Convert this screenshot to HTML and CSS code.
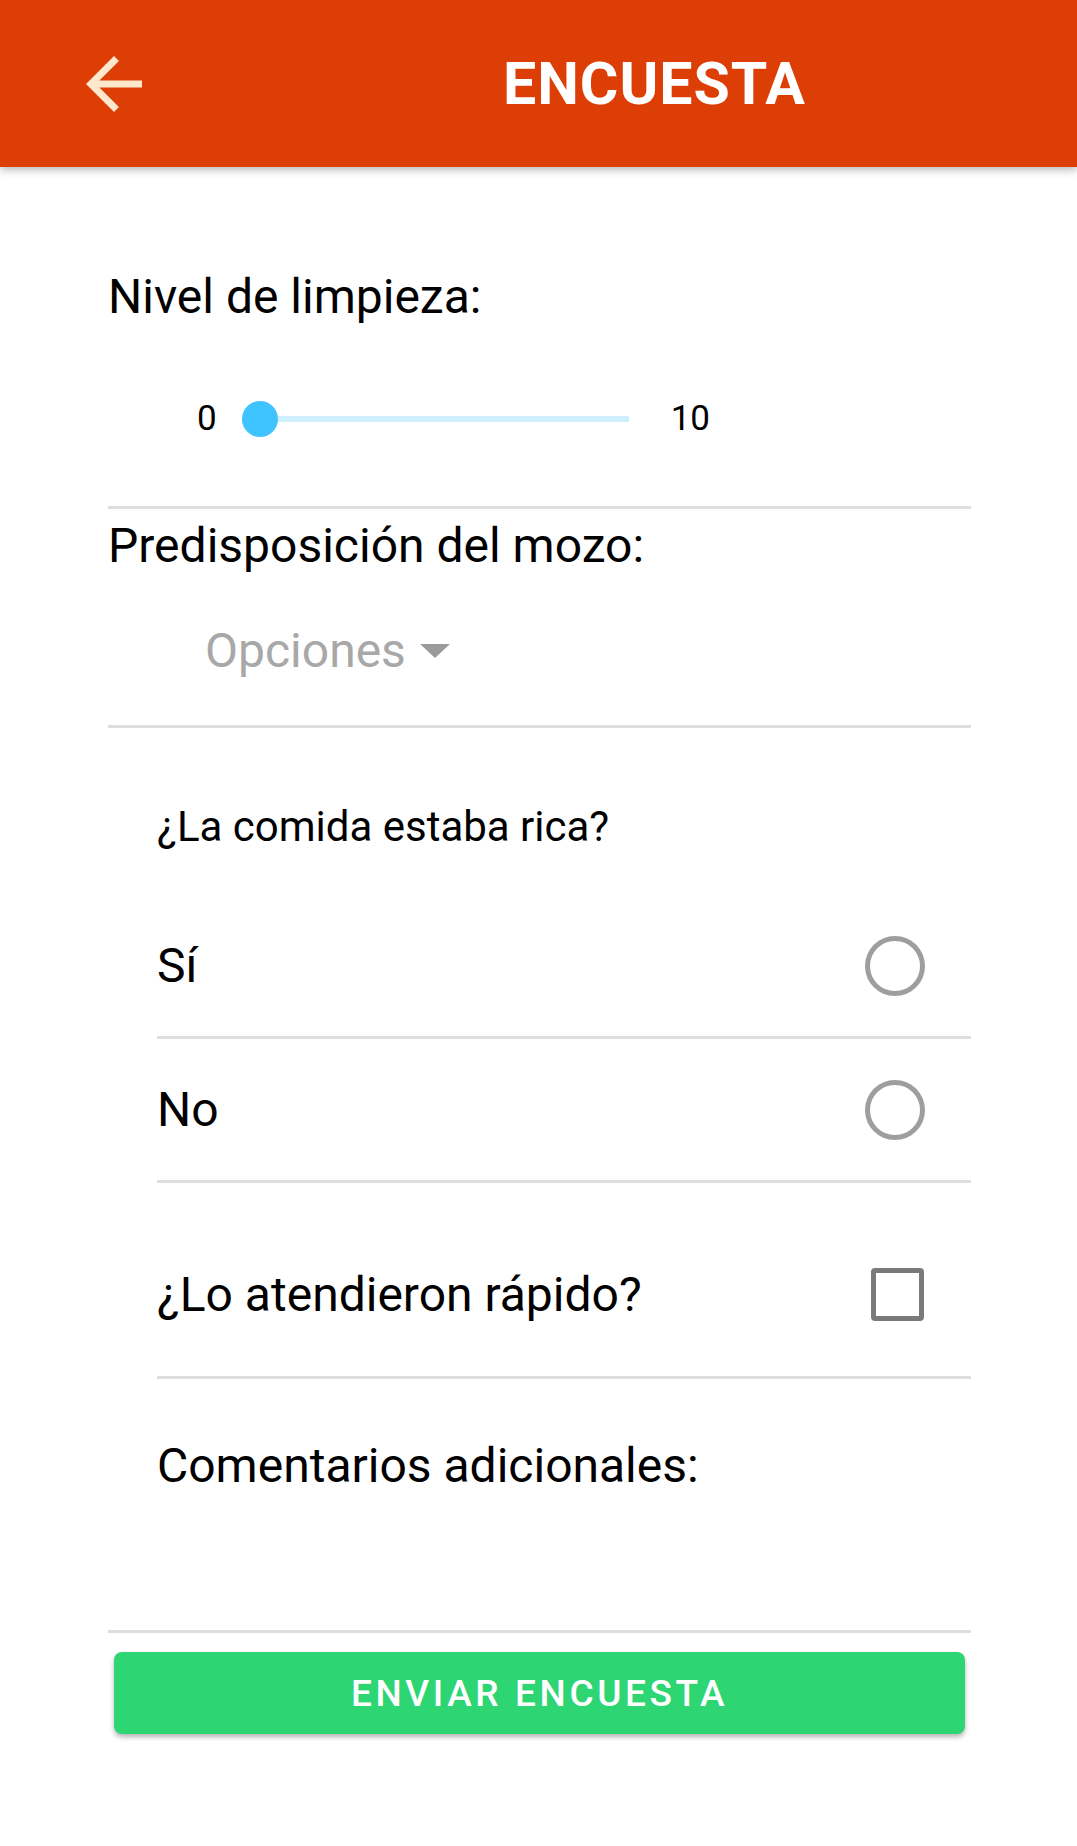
FILE: index.html
```html
<!DOCTYPE html>
<html lang="es">
<head>
<meta charset="utf-8">
<title>Encuesta</title>
<link rel="stylesheet" href="styles.css">
</head>
<body>
<header class="appbar">
  <button class="back" aria-label="Volver">
    <svg viewBox="0 0 24 24" width="84" height="84"><path d="M20 11H7.83l5.59-5.59L12 4l-8 8 8 8 1.41-1.41L7.83 13H20v-2z" fill="currentColor"/></svg>
  </button>
  <h1 class="title">ENCUESTA</h1>
</header>

<main class="form">
  <section class="field field-slider">
    <div class="label">Nivel de limpieza:</div>
    <div class="slider-row">
      <span class="slider-val">0</span>
      <div class="slider"><div class="thumb"></div></div>
      <span class="slider-val">10</span>
    </div>
  </section>

  <section class="field field-select">
    <div class="label label-tight">Predisposición del mozo:</div>
    <div class="select">
      <span class="select-text">Opciones</span>
      <span class="caret"></span>
    </div>
  </section>

  <section class="group">
    <div class="question">¿La comida estaba rica?</div>
    <div class="option-row first">
      <span class="option-text">Sí</span>
      <span class="radio"></span>
    </div>
    <div class="option-row">
      <span class="option-text">No</span>
      <span class="radio"></span>
    </div>
    <div class="option-row check-row">
      <span class="option-text">¿Lo atendieron rápido?</span>
      <span class="checkbox"></span>
    </div>
  </section>

  <section class="comments">
    <div class="label comments-label">Comentarios adicionales:</div>
    <div class="comments-input"></div>
  </section>

  <button class="submit">ENVIAR ENCUESTA</button>
</main>
</body>
</html>
```

FILE: styles.css
```css
* { box-sizing: border-box; }

html, body {
  margin: 0;
  padding: 0;
  background: #ffffff;
}

body {
  font-family: Roboto, "Liberation Sans", Arial, sans-serif;
  color: #000;
  width: 1077px;
  min-height: 1846px;
}

.appbar {
  height: 167px;
  background: #dd3e06;
  display: flex;
  align-items: center;
  box-shadow: 0 3px 8px rgba(0, 0, 0, 0.28);
  position: relative;
  z-index: 1;
}

.back {
  margin-left: 72px;
  width: 84px;
  height: 84px;
  padding: 0;
  border: 0;
  background: transparent;
  color: #fde8cc;
  display: flex;
}

.title {
  margin: 0 0 0 347px;
  font-size: 59px;
  line-height: 68px;
  font-weight: 700;
  color: #ffffff;
  letter-spacing: 1px;
}

.form {
  padding: 102px 106px 0 108px;
}

.field {
  border-bottom: 3px solid #dedede;
}

.label {
  font-size: 48px;
  line-height: 56px;
}

.field-slider {
  padding-bottom: 67px;
}

.slider-row {
  margin-top: 74px;
  height: 40px;
  display: flex;
  align-items: center;
  padding-left: 89px;
}

.slider-val {
  font-size: 35px;
  line-height: 40px;
}

.slider {
  position: relative;
  width: 405px;
  height: 36px;
  margin: 0 24px 0 25px;
}

.slider::before {
  content: "";
  position: absolute;
  left: 18px;
  right: 18px;
  top: 15px;
  height: 6px;
  background: #cdeffe;
}

.thumb {
  position: relative;
  width: 36px;
  height: 36px;
  border-radius: 50%;
  background: #40c4ff;
}

.field-select {
  padding-bottom: 46px;
}

.label-tight {
  margin-top: 9px;
}

.select {
  margin-top: 49px;
  padding-left: 97px;
  height: 56px;
  display: flex;
  align-items: center;
}

.select-text {
  font-size: 48px;
  line-height: 56px;
  color: #a8a8a8;
}

.caret {
  margin-left: 14px;
  width: 0;
  height: 0;
  border-left: 15px solid transparent;
  border-right: 15px solid transparent;
  border-top: 14px solid #9b9b9b;
}

.group {
  margin-left: 49px;
}

.question {
  margin-top: 74px;
  font-size: 42px;
  line-height: 50px;
}

.option-row {
  height: 144px;
  display: flex;
  align-items: center;
  justify-content: space-between;
  border-bottom: 3px solid #dedede;
  padding-right: 46px;
}

.option-row.first {
  margin-top: 43px;
}

.option-text {
  font-size: 48px;
  line-height: 56px;
}

.radio {
  width: 60px;
  height: 60px;
  border: 5px solid #9e9e9e;
  border-radius: 50%;
}

.check-row {
  margin-top: 30px;
  height: 166px;
  padding-right: 47px;
}

.checkbox {
  width: 53px;
  height: 53px;
  border: 5px solid #7a7a7a;
  border-radius: 4px;
}

.comments-label {
  margin-top: 59px;
  padding-left: 49px;
}

.comments-input {
  height: 139px;
  border-bottom: 3px solid #dedede;
}

.submit {
  display: block;
  width: calc(100% - 12px);
  margin: 19px 6px 0;
  height: 82px;
  border: 0;
  border-radius: 8px;
  background: #2ed573;
  color: #ffffff;
  font-family: Roboto, "Liberation Sans", Arial, sans-serif;
  font-size: 37px;
  font-weight: 500;
  letter-spacing: 3.6px;
  box-shadow: 0 3px 5px rgba(0, 0, 0, 0.3);
  padding: 0;
}
```
